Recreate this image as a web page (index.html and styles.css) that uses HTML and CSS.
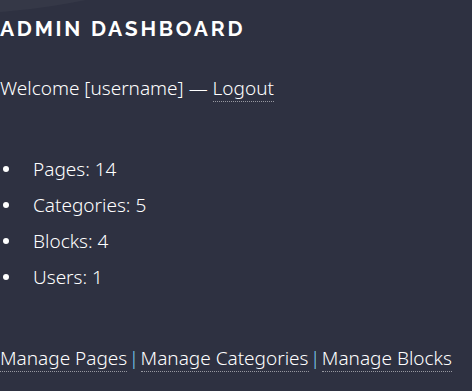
FILE: index.html
```html
<!DOCTYPE html>
<html lang="en">
<head>
<meta charset="utf-8">
<title>Admin Dashboard</title>
<link rel="stylesheet" href="styles.css">
</head>
<body>
<div class="bg-swoosh"></div>
<main class="dash">
  <h1 class="dash-title">Admin Dashboard</h1>
  <p class="welcome">Welcome [username] — <a href="#" class="link">Logout</a></p>
  <ul class="stats">
    <li>Pages: 14</li>
    <li>Categories: 5</li>
    <li>Blocks: 4</li>
    <li>Users: 1</li>
  </ul>
  <nav class="manage">
    <a href="#" class="link">Manage Pages</a><span class="sep">|</span><a href="#" class="link">Manage Categories</a><span class="sep">|</span><a href="#" class="link">Manage Blocks</a>
  </nav>
</main>
</body>
</html>
```
FILE: styles.css
```css
html, body {
  margin: 0;
  padding: 0;
  background: #2e3141;
  height: 100%;
  overflow: hidden;
}
body {
  color: #ffffff;
  font-family: "Source Sans Pro", "Noto Sans", sans-serif;
  font-size: 19px;
  font-weight: 300;
  line-height: 1.65;
  position: relative;
}
.bg-swoosh {
  position: absolute;
  left: -240px;
  top: -86px;
  width: 420px;
  height: 100px;
  border-radius: 50%;
  background: rgba(255,255,255,0.035);
  transform: rotate(-3deg);
}
.dash {
  position: relative;
  padding: 0;
}
.dash-title {
  margin: 13px 0 0;
  font-family: "Raleway", "Inter", sans-serif;
  font-weight: 700;
  font-size: 21px;
  letter-spacing: 2.75px;
  text-transform: uppercase;
  line-height: 1.5;
}
.welcome {
  margin: 28px 0 0;
}
.link {
  color: #ffffff;
  text-decoration: none;
  border-bottom: 1px dotted rgba(255,255,255,0.5);
}
.stats {
  margin: 47px 0 0;
  padding-left: 33px;
  list-style: none;
}
.stats li {
  line-height: 36px;
  position: relative;
}
.stats li::before {
  content: "";
  position: absolute;
  left: -30px;
  top: 15px;
  width: 6px;
  height: 6px;
  border-radius: 50%;
  background: #ffffff;
}
.manage {
  margin-top: 48px;
}
.sep {
  color: #7fd3f0;
  padding: 0 1.5px;
}
```
